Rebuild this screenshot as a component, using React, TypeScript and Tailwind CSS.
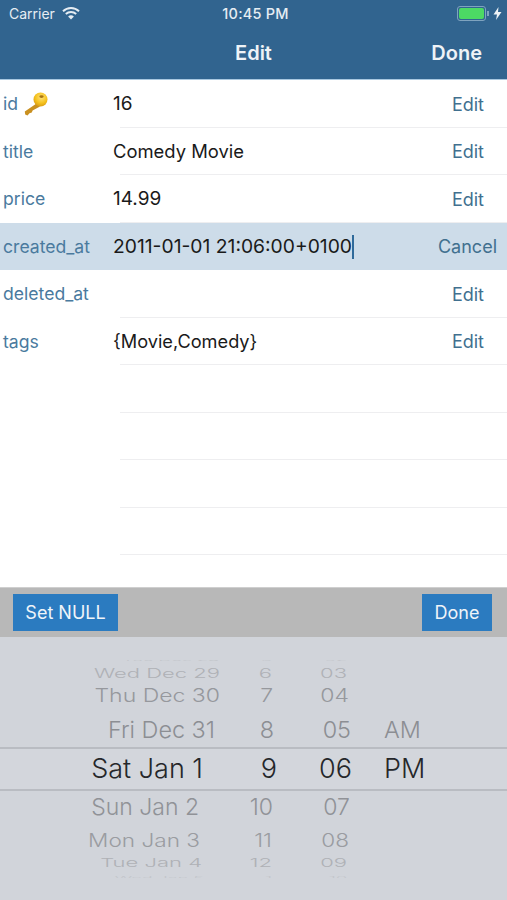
const rows = [
  { label: "id", value: "16", size: "text-[19px]", key: true },
  { label: "title", value: "Comedy Movie", size: "text-[18.4px]" },
  { label: "price", value: "14.99", size: "text-[19px]" },
  { label: "created_at", value: "2011-01-01 21:06:00+0100", size: "text-[19.3px]", active: true },
  { label: "deleted_at", value: "", size: "text-[19px]" },
  { label: "tags", value: "{Movie,Comedy}", size: "text-[18.2px]" },
];

const far = "text-[18px] scale-y-[0.3] -translate-y-[3px] text-[#c3c6cb]";
const wheel = [
  { h: "h-[4px]", cls: far, d: "Tue Dec 28", dp: "pr-[2px]", hr: "5", hp: "pr-[5px]", m: "02", mp: "pr-[6px]", a: "" },
  { h: "h-[18px]", cls: "text-[22px] scale-y-[0.58] text-[#afb1b6]", d: "Wed Dec 29", dp: "pr-[1px]", hr: "6", hp: "pr-[5px]", m: "03", mp: "pr-[6px]", a: "" },
  { h: "h-[29px]", cls: "text-[23px] scale-y-[0.8] text-[#96989d]", d: "Thu Dec 30", dp: "pr-[1px]", hr: "7", hp: "pr-[4px]", m: "04", mp: "pr-[4px]", a: "" },
  { h: "h-[36px] pt-[2px]", cls: "text-[23.4px] text-[#8c8e93]", d: "Fri Dec 31", dp: "pr-[6px]", hr: "8", hp: "pr-[3px]", m: "05", mp: "pr-[2px]", a: "AM" },
  { h: "h-[44px] border-y-2 border-[#b9bcc2] bg-[#d3d6dc]", cls: "text-[27px] text-[#25272a]", d: "Sat Jan 1", dp: "pr-[18px]", hr: "9", hp: "pr-0", m: "06", mp: "pr-[1px]", a: "PM" },
  { h: "h-[32px]", cls: "text-[23px] text-[#909297]", d: "Sun Jan 2", dp: "pr-[22px]", hr: "10", hp: "pr-[4px]", m: "07", mp: "pr-[3px]", a: "" },
  { h: "h-[31px] pt-[4px]", cls: "text-[22.6px] scale-y-[0.8] text-[#9a9ca1]", d: "Mon Jan 3", dp: "pr-[21px]", hr: "11", hp: "pr-[5px]", m: "08", mp: "pr-[4px]", a: "" },
  { h: "h-[18px]", cls: "text-[22px] scale-y-[0.5] text-[#afb1b6]", d: "Tue Jan 4", dp: "pr-[19px]", hr: "12", hp: "pr-[5px]", m: "09", mp: "pr-[6px]", a: "" },
  { h: "h-[6px]", cls: "text-[18px] scale-y-[0.3] translate-y-[3px] text-[#c3c6cb]", d: "Wed Jan 5", dp: "pr-[17px]", hr: "1", hp: "pr-[5px]", m: "10", mp: "pr-[6px]", a: "" },
];

function Key() {
  return (
    <svg width="24" height="24" viewBox="0 0 24 24" className="ml-[6px]">
      <defs>
        <radialGradient id="k" cx="0.55" cy="0.35" r="0.75">
          <stop offset="0" stopColor="#ffe27a" />
          <stop offset="0.55" stopColor="#f5c21d" />
          <stop offset="1" stopColor="#d08f10" />
        </radialGradient>
      </defs>
      <path d="M12.5 11.5 L0.8 19.5 L1.2 22.5 L3.5 23.5 L5.5 21.2 L7.8 20.6 L8.6 18.4 L16 14.5 Z" fill="#c99020" />
      <circle cx="16.5" cy="7.5" r="7" fill="url(#k)" />
      <ellipse cx="17.5" cy="4.6" rx="2.2" ry="1.4" fill="#a87412" />
    </svg>
  );
}

function Battery() {
  return (
    <div className="flex items-center">
      <div className="w-[29px] h-[15px] rounded-[3px] border border-[#7fa3bf] p-[1px]">
        <div className="w-full h-full rounded-[2px] bg-[#4cd964]" />
      </div>
      <div className="w-[1.5px] h-[5px] bg-[#7fa3bf] ml-[1px]" />
      <svg width="9" height="13" viewBox="0 0 9 13" className="ml-[4px]">
        <path d="M5.5 0 L0.5 7.5 H4 L3 13 L8.5 5 H5 Z" fill="#eef3f7" />
      </svg>
    </div>
  );
}

function Wifi() {
  return (
    <svg width="18" height="13" viewBox="0 0 18 13" className="ml-[7px]">
      <path d="M1 4.2 A11.5 11.5 0 0 1 17 4.2" stroke="#e6edf3" strokeWidth="1.9" fill="none" />
      <path d="M3.8 7 A7.6 7.6 0 0 1 14.2 7" stroke="#e6edf3" strokeWidth="1.9" fill="none" />
      <path d="M6.1 9.6 A4.2 4.2 0 0 1 11.9 9.6 L9 12.6 Z" fill="#e6edf3" />
    </svg>
  );
}

export default function App() {
  return (
    <div className="w-[507px] h-[900px] flex flex-col bg-white overflow-hidden font-['Inter','Liberation_Sans',sans-serif]">
      <header className="h-[80px] shrink-0 bg-[#31648f] border-b border-[#a9c8e0] flex flex-col text-white">
        <div className="h-[27px] grid grid-cols-3 items-center pl-[9px] pr-[5px] text-[#e6edf3]">
          <div className="flex items-center text-[14px]">
            Carrier
            <Wifi />
          </div>
          <div className="text-center text-[14.5px] font-medium tracking-[0.2px]">10:45 PM</div>
          <div className="flex justify-end">
            <Battery />
          </div>
        </div>
        <div className="relative flex-1 flex items-center justify-center">
          <span className="text-[20px] font-semibold text-[#eef3f7]">Edit</span>
          <span className="absolute right-[25px] text-[20px] font-semibold text-[#eef3f7]">Done</span>
        </div>
      </header>

      <main className="h-[507px] shrink-0 flex flex-col">
        {rows.map((r) => (
          <div key={r.label} className={`h-[47.5px] shrink-0 pt-[1px] flex items-center relative ${r.active ? "bg-[#cddce9]" : ""}`}>
            <div className="w-[113px] pl-[3px] flex items-center text-[17.6px] text-[#4a7a9e]">
              {r.label}
              {r.key && <Key />}
            </div>
            <div className={`flex-1 flex items-center text-[#1a1a1a] ${r.size}`}>
              {r.value}
              {r.active && <span className="w-[2px] h-[24px] bg-[#2f6a9a]" />}
            </div>
            <div className={`text-[18px] text-[#41708f] ${r.active ? "pr-[10px]" : "pr-[23px]"}`}>
              {r.active ? "Cancel" : "Edit"}
            </div>
            {!r.active && (
              <div className="absolute left-[120px] right-0 bottom-0 h-px bg-[#eeeef0]" />
            )}
          </div>
        ))}
        {[0, 1, 2, 3, 4].map((i) => (
          <div key={i} className="h-[47.5px] shrink-0 flex justify-end items-end">
            <div className="w-[387px] h-px bg-[#eeeef0]" />
          </div>
        ))}
      </main>

      <div className="h-[50px] shrink-0 bg-[#b8b8b8] border-t border-[#cfcfcf] flex items-center justify-between pl-[13px] pr-[15px] text-[18px] text-[#eef4f9]">
        <button className="w-[105px] h-[37px] bg-[#2b7bc0]">Set NULL</button>
        <button className="w-[70px] h-[37px] bg-[#2b7bc0]">Done</button>
      </div>

      <div className="flex-1 bg-[#d1d4da] pt-[23px] font-light">
        {wheel.map((w) => (
          <div key={w.d} className={`${w.h} flex items-center overflow-hidden whitespace-nowrap`}>
            <div className={`w-[221px] text-right ${w.dp}`}>
              <span className={`inline-block origin-right ${w.cls}`}>{w.d}</span>
            </div>
            <div className={`w-[56px] text-right ${w.hp}`}>
              <span className={`inline-block origin-right ${w.cls}`}>{w.hr}</span>
            </div>
            <div className={`w-[76px] text-right ${w.mp}`}>
              <span className={`inline-block origin-right ${w.cls}`}>{w.m}</span>
            </div>
            <div className="pl-[31px]">
              <span className={`inline-block ${w.cls}`}>{w.a}</span>
            </div>
          </div>
        ))}
      </div>
    </div>
  );
}
